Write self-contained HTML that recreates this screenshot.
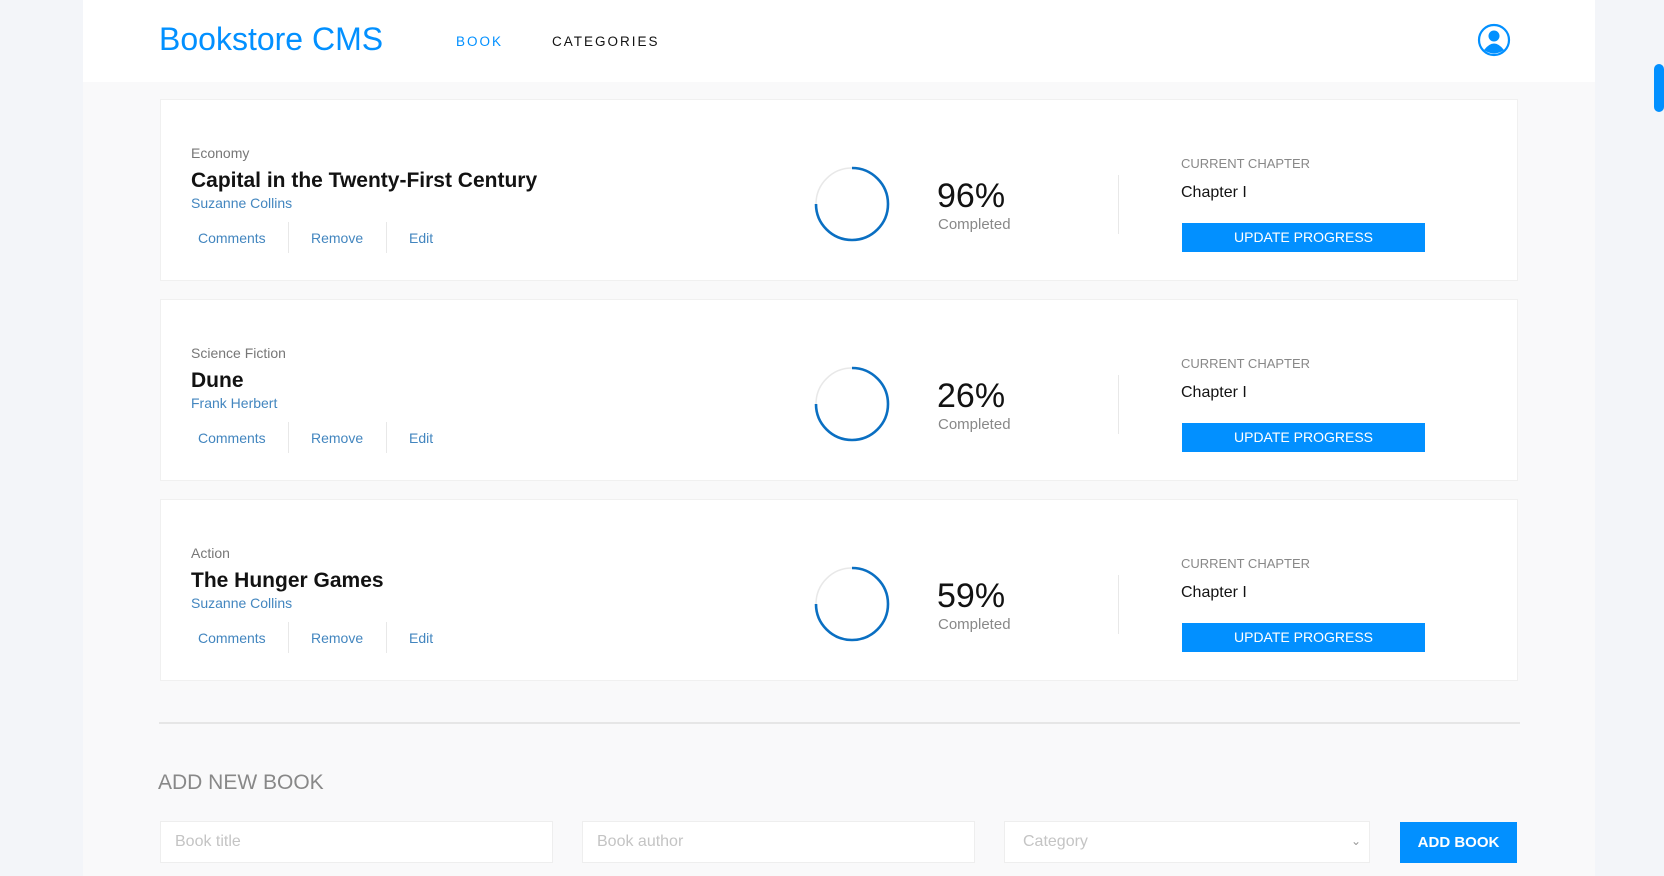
<!DOCTYPE html>
<html><head><meta charset="utf-8"><style>
*{box-sizing:border-box;margin:0;padding:0}
body{width:1664px;height:876px;overflow:hidden;background:#f3f5f9;font-family:"Liberation Sans",sans-serif;position:relative}
.main{position:absolute;left:83px;top:0;width:1512px;height:876px;background:#f9f9fa}
.hdr{position:absolute;left:83px;top:0;width:1512px;height:82px;background:#fff}
.abs{position:absolute;white-space:nowrap}
.logo{left:159px;top:21px;font-size:32px;color:#0290ff}
.nav{top:34px;font-size:13.5px;letter-spacing:2px}
.card{position:absolute;left:160px;width:1358px;background:#fff;border:1px solid #f0f0f0}
.cat{font-size:14px;color:#777}
.title{font-size:21px;font-weight:bold;color:#121212}
.author{font-size:14px;color:#4386bf}
.lk{font-size:14px;color:#4386bf}
.dv{position:absolute;width:1px;background:#e8e8e8}
.pct{font-size:34px;color:#121212}
.cmp{font-size:15px;color:#888}
.cc{font-size:13px;color:#888}
.ch{font-size:16px;color:#121212}
.btn{position:absolute;background:#0290ff;color:#fff;font-size:14px;text-align:center}
.inp{position:absolute;top:821px;height:42px;background:#fff;border:1px solid #eee;font-size:16px;color:#c4c4c4;padding:11px 14px}
</style></head><body>
<div class="main"></div>
<div class="hdr"></div>
<div class="abs logo">Bookstore CMS</div>
<div class="abs nav" style="left:456px;color:#0290ff">BOOK</div>
<div class="abs nav" style="left:552px;color:#121212">CATEGORIES</div>
<svg class="abs" style="left:1477px;top:23px" width="34" height="34" viewBox="0 0 34 34"><circle cx="17" cy="17" r="15" fill="none" stroke="#0290ff" stroke-width="2.2"/><circle cx="17" cy="13" r="5.5" fill="#0290ff"/><path d="M7 27 Q17 14 27 27 Q17 34 7 27Z" fill="#0290ff"/></svg>
<div style="position:absolute;left:1654px;top:64px;width:10px;height:48px;background:#0290ff;border-radius:5px"></div>

<div class="card" style="top:99px;height:182px"></div>
<div class="card" style="top:299px;height:182px"></div>
<div class="card" style="top:499px;height:182px"></div>

<div id="c"></div>
<script>
var d=[["Economy","Capital in the Twenty-First Century","Suzanne Collins","96%",0],["Science Fiction","Dune","Frank Herbert","26%",200],["Action","The Hunger Games","Suzanne Collins","59%",400]];
var h="";
d.forEach(function(r){var o=r[4];
h+='<div class="abs cat" style="left:191px;top:'+(145+o)+'px">'+r[0]+'</div>';
h+='<div class="abs title" style="left:191px;top:'+(169+o)+'px">'+r[1]+'</div>';
h+='<div class="abs author" style="left:191px;top:'+(195+o)+'px">'+r[2]+'</div>';
h+='<div class="abs lk" style="left:198px;top:'+(230+o)+'px">Comments</div>';
h+='<div class="dv" style="left:288px;top:'+(222+o)+'px;height:31px"></div>';
h+='<div class="abs lk" style="left:311px;top:'+(230+o)+'px">Remove</div>';
h+='<div class="dv" style="left:386px;top:'+(222+o)+'px;height:31px"></div>';
h+='<div class="abs lk" style="left:409px;top:'+(230+o)+'px">Edit</div>';
h+='<svg class="abs" style="left:813px;top:'+(165+o)+'px" width="78" height="78"><circle cx="39" cy="39" r="36" fill="none" stroke="#e8e8e8" stroke-width="1.5"/><path d="M39 3 A36 36 0 1 1 3 39" fill="none" stroke="#0a6fc2" stroke-width="2.6"/></svg>';
h+='<div class="abs pct" style="left:937px;top:'+(177+o)+'px">'+r[3]+'</div>';
h+='<div class="abs cmp" style="left:938px;top:'+(216+o)+'px">Completed</div>';
h+='<div class="dv" style="left:1118px;top:'+(175+o)+'px;height:59px"></div>';
h+='<div class="abs cc" style="left:1181px;top:'+(156+o)+'px">CURRENT CHAPTER</div>';
h+='<div class="abs ch" style="left:1181px;top:'+(184+o)+'px">Chapter I</div>';
h+='<div class="btn" style="left:1182px;top:'+(223+o)+'px;width:243px;height:29px;line-height:29px">UPDATE PROGRESS</div>';
});
document.getElementById("c").innerHTML=h;
</script>

<div style="position:absolute;left:159px;top:722px;width:1361px;height:2px;background:#e6e6e6"></div>
<div class="abs" style="left:158px;top:771px;font-size:21px;color:#888">ADD NEW BOOK</div>
<div class="inp" style="left:160px;width:393px">Book title</div>
<div class="inp" style="left:582px;width:393px">Book author</div>
<div class="inp" style="left:1004px;width:366px;padding-left:18px">Category<span style="position:absolute;right:8px;top:12px;font-size:12px;color:#999">&#8964;</span></div>
<div class="btn" style="left:1400px;top:822px;width:117px;height:41px;line-height:41px;font-weight:bold;font-size:15px">ADD BOOK</div>
</body></html>
